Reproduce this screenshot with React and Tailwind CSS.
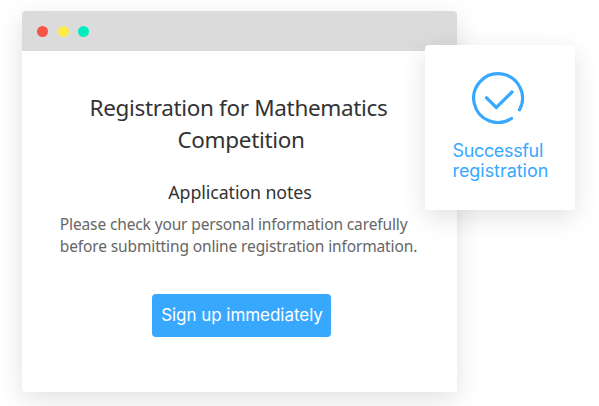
function SuccessIcon() {
  return (
    <svg
      className="w-[52px] h-[52px]"
      viewBox="0 0 52 52"
      fill="none"
      stroke="#38a8ff"
      strokeWidth="3.2"
      strokeLinecap="round"
    >
      <path d="M47.5 37.8A24.4 24.4 0 1 0 39.5 46.5" />
      <path d="M14.5 25.8L24.3 35.5L40 20" />
    </svg>
  );
}

function App() {
  return (
    <div className="relative w-[599px] h-[406px] bg-white overflow-hidden pl-[22px] pt-[11px]">

      {/* Browser window */}
      <div className="w-[435px] h-[381px] rounded bg-white overflow-hidden shadow-[0_7px_26px_rgba(0,0,0,0.12)] flex flex-col">
        <div className="h-10 shrink-0 bg-[#dbdbdb] flex items-center pl-[15px] gap-[9.5px]">
          <span className="w-[11px] h-[11px] rounded-full bg-[#f55448]" />
          <span className="w-[11px] h-[11px] rounded-full bg-[#ffeb46]" />
          <span className="w-[11px] h-[11px] rounded-full bg-[#00edc0]" />
        </div>

        <div className="flex flex-col items-center pt-[41px] font-['Noto_Sans',sans-serif] text-[#333] whitespace-nowrap">
          <h1 className="mr-[2px] text-[22.5px] leading-8 tracking-[-0.34px] text-center">
            Registration for Mathematics
            <br />
            <span className="pl-[5px]">Competition</span>
          </h1>

          <h2 className="mt-[22px] ml-[1px] text-[17.8px] leading-7 tracking-[-0.1px]">Application notes</h2>

          <p className="mt-[7px] mr-[2px] text-[15.5px] leading-[22px] tracking-[-0.13px] text-[#666]">
            Please check your personal information carefully
            <br />
            before submitting online registration information.
          </p>

          <button className="mt-[37px] ml-1 pt-px pl-px w-[179px] h-[43px] rounded bg-[#38a8ff] text-white text-[17px] tracking-[-0.04px] font-['Inter',sans-serif]">
            Sign up immediately
          </button>
        </div>
      </div>

      {/* Success card */}
      <div className="absolute left-[425px] top-[45px] w-[150px] h-[165px] rounded bg-white shadow-[0_7px_26px_rgba(0,0,0,0.12)] pt-[27px] flex flex-col">
        <div className="pl-[47px]">
          <SuccessIcon />
        </div>
        <p className="mt-[17px] pl-[27.5px] text-[18px] leading-5 text-[#38a8ff] font-['Inter',sans-serif]">
          <span className="tracking-[-0.35px]">Successful</span>
          <br />
          <span className="tracking-[-0.05px]">registration</span>
        </p>
      </div>

    </div>
  );
}

export default App;
